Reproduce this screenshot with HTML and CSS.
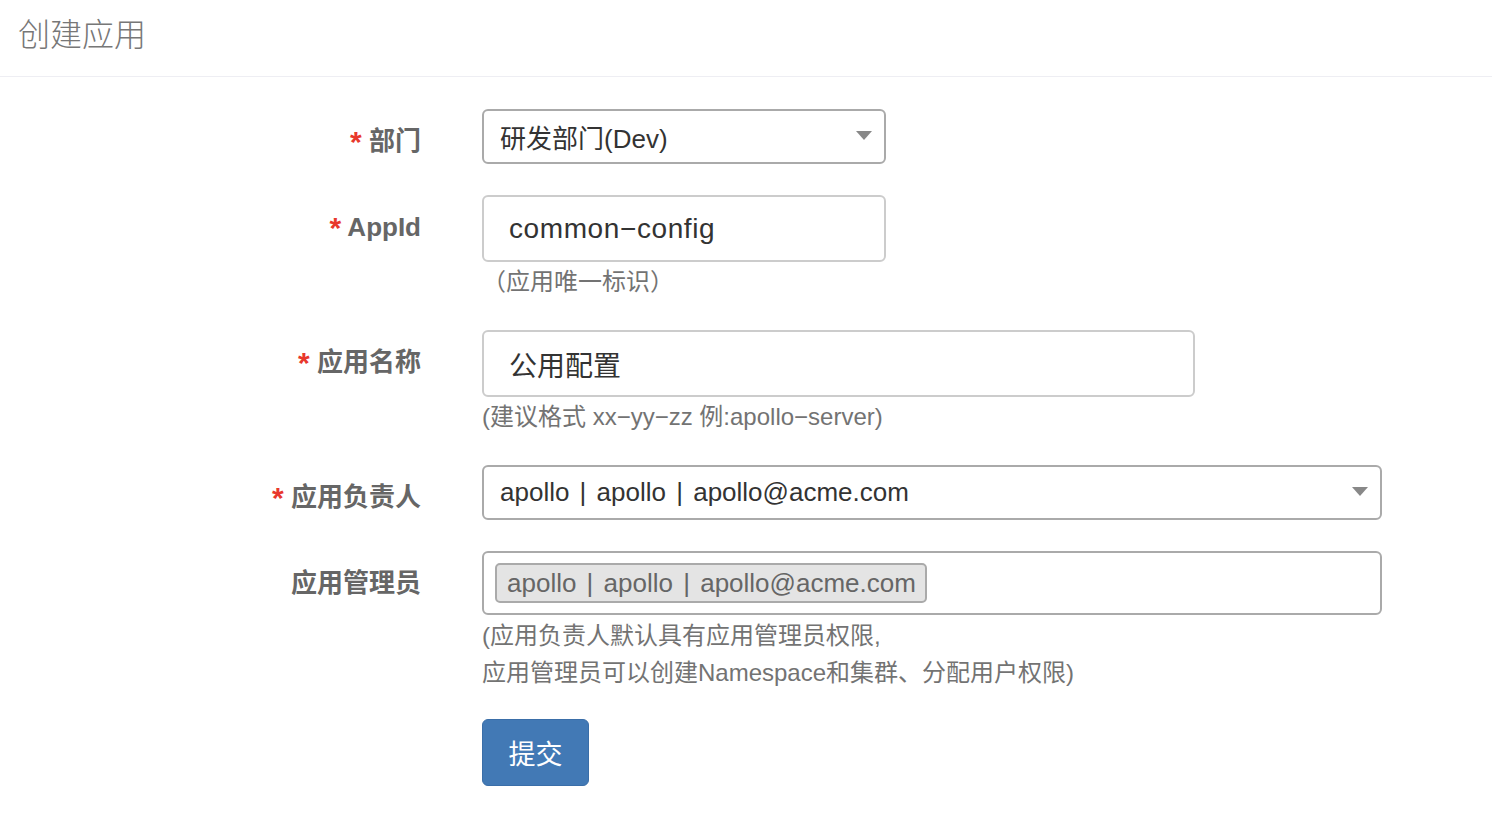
FILE: index.html
```html
<!DOCTYPE html>
<html lang="zh-CN">
<head>
<meta charset="utf-8">
<title>创建应用</title>
<link rel="stylesheet" href="styles.css">
</head>
<body>
<header class="page-header">
  <h1 class="page-title">创建应用</h1>
</header>
<form class="app-form">
  <div class="form-row">
    <label class="form-label"><span class="req">*</span> 部门</label>
    <div class="form-control-col">
      <div class="select select-narrow">
        <span class="select-text">研发部门(Dev)</span>
        <span class="caret"></span>
      </div>
    </div>
  </div>
  <div class="form-row">
    <label class="form-label"><span class="req">*</span> AppId</label>
    <div class="form-control-col">
      <div class="input input-narrow input-latin">common−config</div>
      <div class="help">（应用唯一标识）</div>
    </div>
  </div>
  <div class="form-row">
    <label class="form-label"><span class="req">*</span> 应用名称</label>
    <div class="form-control-col">
      <div class="input input-mid">公用配置</div>
      <div class="help">(建议格式 xx−yy−zz 例:apollo−server)</div>
    </div>
  </div>
  <div class="form-row">
    <label class="form-label"><span class="req">*</span> 应用负责人</label>
    <div class="form-control-col">
      <div class="select select-wide">
        <span class="select-text user-text">apollo | apollo | apollo@acme.com</span>
        <span class="caret"></span>
      </div>
    </div>
  </div>
  <div class="form-row">
    <label class="form-label">应用管理员</label>
    <div class="form-control-col">
      <div class="multi">
        <span class="tag user-text">apollo | apollo | apollo@acme.com</span>
      </div>
      <div class="help help-multi">(应用负责人默认具有应用管理员权限,<br>应用管理员可以创建Namespace和集群、分配用户权限)</div>
    </div>
  </div>
  <div class="form-row submit-row">
    <div class="form-label"></div>
    <div class="form-control-col">
      <button type="button" class="btn-primary">提交</button>
    </div>
  </div>
</form>
</body>
</html>
```

FILE: styles.css
```css
html, body {
  margin: 0;
  padding: 0;
  background: #fff;
}
body {
  font-family: "Liberation Sans", "Noto Sans CJK SC", sans-serif;
  color: #333;
}
.page-header {
  height: 77px;
  border-bottom: 1px solid #eeeef3;
  padding-left: 18px;
  box-sizing: border-box;
}
.page-title {
  margin: 0;
  padding-top: 10px;
  font-size: 32px;
  line-height: 44px;
  font-weight: 300;
  color: #777;
  font-family: "Noto Sans CJK SC", sans-serif;
}
.app-form {
  padding-top: 32px;
}
.form-row {
  display: flex;
  align-items: flex-start;
  margin-bottom: 31px;
}
.form-label {
  width: 421px;
  flex: none;
  text-align: right;
  padding-top: 14px;
  line-height: 36px;
  font-size: 26px;
  font-weight: bold;
  color: #666;
  box-sizing: border-box;
}
.req {
  color: #e8382c;
  font-size: 30px;
  line-height: 30px;
  vertical-align: -2px;
}
.form-control-col {
  margin-left: 61px;
  display: flex;
  flex-direction: column;
}
.select {
  height: 55px;
  border: 2px solid #aaa;
  border-radius: 6px;
  box-sizing: border-box;
  display: flex;
  align-items: center;
  justify-content: space-between;
  padding: 0 12px 0 16px;
  font-size: 26px;
  color: #333;
}
.select-narrow { width: 404px; }
.select-wide { width: 900px; }
.user-text {
  word-spacing: 3px;
}
.caret {
  width: 0;
  height: 0;
  border-left: 8px solid transparent;
  border-right: 8px solid transparent;
  border-top: 9px solid #888;
  margin-top: -3px;
}
.input {
  height: 67px;
  border: 2px solid #ccc;
  border-radius: 6px;
  box-sizing: border-box;
  display: flex;
  align-items: center;
  padding-left: 25px;
  font-size: 28px;
  color: #333;
}
.input-latin {
  letter-spacing: 0.6px;
}
.input-narrow { width: 404px; }
.input-mid { width: 713px; }
.help {
  margin-top: 2px;
  margin-bottom: -1px;
  font-size: 24px;
  line-height: 36px;
  color: #737373;
}
.help-multi {
  line-height: 37px;
}
.multi {
  width: 900px;
  height: 64px;
  border: 2px solid #aaa;
  border-radius: 6px;
  box-sizing: border-box;
  display: flex;
  align-items: center;
  padding-left: 11px;
}
.tag {
  background: #e4e4e4;
  border: 2px solid #aaa;
  border-radius: 5px;
  height: 40px;
  box-sizing: border-box;
  display: flex;
  align-items: center;
  padding: 0 9px 0 10px;
  font-size: 26px;
  color: #666;
}
.submit-row {
  margin-top: -2px;
}
.btn-primary {
  width: 107px;
  height: 67px;
  background: #4279b5;
  border: 1px solid #3a6ea8;
  border-radius: 6px;
  color: #fff;
  font-size: 27px;
  font-family: "Noto Sans CJK SC", sans-serif;
  padding: 0;
  cursor: pointer;
}
```
